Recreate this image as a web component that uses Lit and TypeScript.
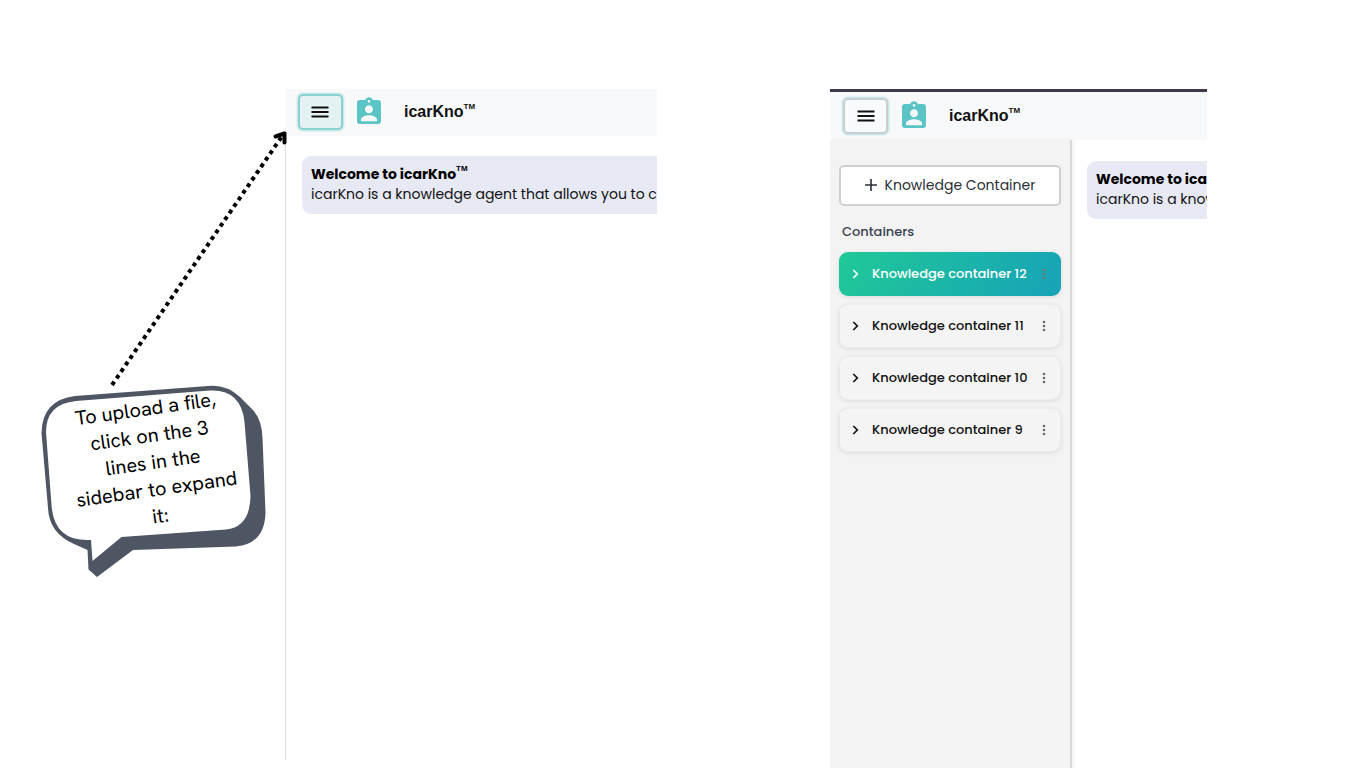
import { LitElement, html, css, svg, nothing } from "lit";
import { customElement, property } from "lit/decorators.js";

const menuIcon = svg`<svg class="menu-icon" viewBox="0 0 18 14" aria-hidden="true"><path d="M.5 2.500h17M.5 7h17M.5 11.500h17" fill="none" stroke="#111" stroke-width="1.8"/></svg>`;

const badgeIcon = svg`<svg class="badge-icon" viewBox="0 0 24 24" aria-hidden="true"><path fill="#5bc4c4" d="M19 3h-4.18C14.4 1.84 13.3 1 12 1s-2.4.84-2.82 2H5c-1.1 0-2 .9-2 2v14c0 1.1.9 2 2 2h14c1.1 0 2-.9 2-2V5c0-1.1-.9-2-2-2zm-7 0c.55 0 1 .45 1 1s-.45 1-1 1-1-.45-1-1 .45-1 1-1zm0 4c1.66 0 3 1.34 3 3s-1.34 3-3 3-3-1.34-3-3 1.34-3 3-3zm6 12H6v-1.4c0-2 4-3.1 6-3.1s6 1.1 6 3.1V19z"/></svg>`;

@customElement("knowledge-sidebar")
class KnowledgeSidebar extends LitElement {
  @property({ attribute: false }) items: string[] = [];
  @property() selected = "";

  static styles = css`
    * { box-sizing: border-box; }
    :host {
      display: block;
      box-sizing: border-box;
      flex: none;
      width: 242px;
      padding: 25px 9px;
      background: #f3f3f3;
      border-right: 2px solid #d9d9d9;
      box-shadow: 2px 0 4px rgba(0, 0, 0, 0.06);
      font-family: Poppins, Inter, sans-serif;
    }
    .add {
      display: flex;
      align-items: center;
      justify-content: center;
      gap: 8px;
      width: 100%;
      height: 41px;
      padding: 0 0 2px;
      border: 2px solid #d0d0d0;
      border-radius: 5px;
      background: #fff;
      color: #2b2f36;
      font: 400 14px/20px Poppins, Inter, sans-serif;
      white-space: nowrap;
    }
    .plus { width: 12px; height: 12px; }
    .heading {
      margin: 16px 3px 10px;
      color: #3b4252;
      font-size: 13px;
      line-height: 20px;
      font-weight: 500;
    }
    .list {
      display: grid;
      gap: 8px;
      margin: 0;
      padding: 0;
      list-style: none;
    }
    .item {
      display: flex;
      align-items: center;
      height: 44px;
      padding: 0 8px 0 0;
      border: 1px solid #ececec;
      border-radius: 9px;
      background: #f4f4f4;
      box-shadow: 0 1px 4px rgba(0, 0, 0, 0.1);
      color: #111;
    }
    .item.active {
      border-color: transparent;
      background: linear-gradient(120deg, #20c997, #17a2b8) border-box;
      color: #fff;
    }
    .name {
      display: flex;
      align-items: center;
      flex: 1;
      gap: 12px;
      padding: 0 0 0 11px;
      border: 0;
      background: none;
      color: inherit;
      font: 500 13px/20px Poppins, Inter, sans-serif;
      white-space: nowrap;
    }
    .chevron { width: 9px; height: 10px; }
    .more { display: flex; padding: 4px 6px; border: 0; background: none; color: #6b6b6b; }
    .active .more { color: #7c7474; }
    .dots { width: 4px; height: 12px; }
  `;

  render() {
    return html`
      <button class="add" type="button">
        <svg class="plus" viewBox="0 0 12 12" aria-hidden="true"><path d="M6 0v12M0 6h12" stroke="#2b2f36" stroke-width="1.6"/></svg>
        Knowledge Container
      </button>
      <h2 class="heading">Containers</h2>
      <ul class="list">
        ${this.items.map((item) => html`
          <li class="item ${item === this.selected ? "active" : ""}">
            <button class="name" type="button">
              <svg class="chevron" viewBox="0 0 9 10" aria-hidden="true"><path d="M2.3 1l4 4-4 4" fill="none" stroke="currentColor" stroke-width="1.7"/></svg>
              ${item}
            </button>
            <button class="more" type="button" aria-label="Options">
              <svg class="dots" viewBox="0 0 4 12" aria-hidden="true"><g fill="currentColor"><circle cx="2" cy="2" r="1.3"/><circle cx="2" cy="6" r="1.3"/><circle cx="2" cy="10" r="1.3"/></g></svg>
            </button>
          </li>`)}
      </ul>`;
  }
}

@customElement("agent-panel")
class AgentPanel extends LitElement {
  @property({ type: Boolean, reflect: true }) expanded = false;

  static styles = css`
    * { box-sizing: border-box; }
    :host {
      display: flex;
      flex-direction: column;
      min-width: 0;
      overflow: hidden;
      font-family: Poppins, Inter, sans-serif;
    }
    :host([expanded]) { border-top: 3px solid #40394a; }
    .bar {
      display: flex;
      align-items: center;
      flex: none;
      height: 47px;
      padding: 0 13px 2px;
      background: #f8f9fb;
    }
    :host([expanded]) .bar { height: 48px; padding-bottom: 0; }
    .menu {
      display: flex;
      align-items: center;
      justify-content: center;
      width: 45px;
      height: 36px;
      padding: 0 1px 0 0;
      border: 2px solid #8ad2d0;
      border-radius: 5px;
      background: #e5f2f3;
      box-shadow: 0 0 2px 1px #b5e2e1;
    }
    :host([expanded]) .menu {
      padding: 0;
      border-color: #c9cfd0;
      background: #f9fafb;
    }
    .menu-icon { width: 18px; height: 14px; }
    .badge-icon { width: 32px; height: 32px; margin: 0 19px 0 10px; }
    .brand {
      margin: 0;
      color: #111;
      font: 700 16px/20px "Liberation Sans", Arial, sans-serif;
      white-space: nowrap;
    }
    .tm {
      font: 700 8px/1px "Liberation Sans", Arial, sans-serif;
      vertical-align: 8px;
    }
    .body { display: flex; flex: 1; min-height: 0; }
    .content { flex: 1; min-width: 0; padding: 20px 0 0 16px; }
    :host(:not([expanded])) .body { margin-bottom: 8px; border-left: 1px solid #ddd; }
    :host([expanded]) .content { padding-top: 21px; padding-left: 15px; }
    .card {
      overflow: hidden;
      height: 58px;
      padding: 8px 9px;
      border-radius: 9px 0 0 9px;
      background: #e7e9f5;
      color: #111;
      font-size: 14px;
      line-height: 21px;
      white-space: nowrap;
    }
    .title { margin: 0; color: #000; font-size: 14px; line-height: 20px; font-weight: 700; }
    .text { margin: 0; }
  `;

  render() {
    return html`
      <header class="bar">
        <button class="menu" type="button" aria-label="Menu">${menuIcon}</button>
        ${badgeIcon}
        <h1 class="brand">icarKno<span class="tm">TM</span></h1>
      </header>
      <div class="body">
        ${this.expanded
          ? html`<knowledge-sidebar
              selected="Knowledge container 12"
              .items=${[12, 11, 10, 9].map((n) => `Knowledge container ${n}`)}
            ></knowledge-sidebar>`
          : nothing}
        <main class="content">
          <section class="card">
            <h2 class="title">Welcome to icarKno<span class="tm">TM</span></h2>
            <p class="text">icarKno is a knowledge agent that allows you to c</p>
          </section>
        </main>
      </div>`;
  }
}

@customElement("app-root")
class AppRoot extends LitElement {
  static styles = css`
    :host {
      display: grid;
      box-sizing: border-box;
      position: relative;
      grid-template-columns: 285fr 372fr 173fr 377fr 159fr;
      height: 100vh;
      padding-top: 89px;
      overflow: hidden;
      background: #fff;
    }
    .first { grid-column: 2; }
    .second { grid-column: 4; }
    .drawing {
      position: absolute;
      top: 0;
      left: 0;
      width: 300px;
      height: 600px;
      pointer-events: none;
    }
    .note {
      position: absolute;
      top: 395px;
      left: 63px;
      width: 180px;
      margin: 0;
      color: #000;
      font: 400 20px/27px "Hanken Grotesk", "Noto Sans", sans-serif;
      font-variant-ligatures: none;
      text-align: center;
      transform: rotate(-8deg);
    }
  `;

  render() {
    return html`
      <agent-panel class="first"></agent-panel>
      <agent-panel class="second" expanded></agent-panel>
      <svg class="drawing" viewBox="0 0 300 600" aria-hidden="true">
        <path fill="#4e5664" d="M75 396L208 386Q226 384 240 397L253 410Q262 420 262.500 438L265.500 512Q265 544 236 546.500L133 550L97 577L88.500 569.500L87.500 550L74 544Q49 533 48 508L41.500 433Q42 400 75 396Z"/>
        <path fill="#fff" d="M76 401L210 390.500Q241 389 244.500 422L250.500 496Q250 527 226 529.500L121.500 537L92.500 561L91 540Q54 542 51.500 505L46 432Q46 404 76 401Z"/>
        <path fill="none" stroke="#000" stroke-width="4" stroke-dasharray="4 4" d="M112 385L281.500 137"/>
        <path fill="none" stroke="#000" stroke-width="4" stroke-linecap="round" stroke-linejoin="round" d="M275.500 136.500L284.500 133.500V142.500"/>
      </svg>
      <p class="note">To upload a file,<br>click on the 3<br>lines in the<br>sidebar to expand<br>it:</p>`;
  }
}
